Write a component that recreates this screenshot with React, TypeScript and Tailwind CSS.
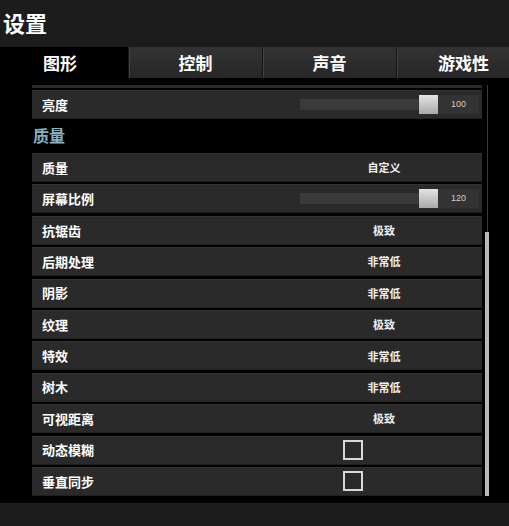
import React from 'react';

type Row =
  | { label: string; kind: 'value'; value: string }
  | { label: string; kind: 'slider'; value: string }
  | { label: string; kind: 'check' };

const qualityRows: Row[] = [
  { label: '质量', kind: 'value', value: '自定义' },
  { label: '屏幕比例', kind: 'slider', value: '120' },
  { label: '抗锯齿', kind: 'value', value: '极致' },
  { label: '后期处理', kind: 'value', value: '非常低' },
  { label: '阴影', kind: 'value', value: '非常低' },
  { label: '纹理', kind: 'value', value: '极致' },
  { label: '特效', kind: 'value', value: '非常低' },
  { label: '树木', kind: 'value', value: '非常低' },
  { label: '可视距离', kind: 'value', value: '极致' },
  { label: '动态模糊', kind: 'check' },
  { label: '垂直同步', kind: 'check' },
];

const tabs = ['控制', '声音', '游戏性'];

function Slider({ value }: { value: string }) {
  return (
    <div className="ml-auto mr-[3px] flex items-center">
      <div className="w-[119px] h-[11px] bg-[#3a3a3a]" />
      <div className="w-[19px] h-[19px] bg-gradient-to-b from-[#e4e4e4] to-[#a9a9a9]" />
      <div className="w-[41px] h-[19px] bg-[#333333] flex items-center justify-center text-[9px] text-[#d0d0d0] font-['Liberation_Sans_Narrow','Liberation_Sans',sans-serif]">
        {value}
      </div>
    </div>
  );
}

function SettingRow({ row }: { row: Row }) {
  return (
    <div className="h-[29px] flex items-center bg-[#2a2a2a] border-t border-[#333333] border-b border-b-[#1f1f1f]">
      <div className="w-[272px] pl-[10px] text-[13px] font-bold text-white">{row.label}</div>
      {row.kind === 'value' && (
        <div className="w-[160px] text-center text-[11px] font-bold text-[#f0f0f0]">{row.value}</div>
      )}
      {row.kind === 'slider' && <Slider value={row.value} />}
      {row.kind === 'check' && (
        <div className="ml-[39px] w-[20px] h-[20px] border-2 border-[#d8d8d8]" />
      )}
    </div>
  );
}

export default function App() {
  return (
    <div className="w-[509px] h-[526px] bg-black flex flex-col overflow-hidden font-['Noto_Sans_CJK_SC','Noto_Sans',sans-serif]">
      {/* Titel */}
      <div className="h-[47px] shrink-0 bg-[#1c1c1c] flex items-center pl-[3px] pb-[2px] text-[22px] font-bold text-white">
        设置
      </div>

      {/* Tabs */}
      <div className="h-[31px] shrink-0 flex">
        <div className="w-[128px] shrink-0 bg-black flex items-center justify-center pr-[8px] text-[17px] font-bold text-white">
          图形
        </div>
        {tabs.map((t) => (
          <div
            key={t}
            className="w-[134px] shrink-0 bg-gradient-to-b from-[#333333] to-[#272727] border-l border-l-[#141414] shadow-[inset_1px_0_0_#454545] flex items-center justify-center text-[17px] font-bold text-white"
          >
            {t}
          </div>
        ))}
      </div>

      {/* Inhalt */}
      <div className="flex-1 flex pl-[32px]">
        <div className="w-[450px] pt-[7px] flex flex-col">
          <div className="h-[3px] bg-[#2a2a2a]" />
          <div className="mt-[2px]">
            <SettingRow row={{ label: '亮度', kind: 'slider', value: '100' }} />
          </div>
          <div className="h-[34px] flex items-center pl-[1px] pb-[2px] text-[16px] font-bold text-[#86b2c2]">
            质量
          </div>
          <div className="flex flex-col gap-[2.4px]">
            {qualityRows.map((r) => (
              <SettingRow key={r.label} row={r} />
            ))}
          </div>
        </div>

        {/* Scrollbar */}
        <div className="ml-[3px] w-[4px] pt-[7px] flex flex-col">
          <div className="h-[147px] flex justify-center">
            <div className="w-[1px] bg-[#3a3a3a]" />
          </div>
          <div className="h-[264px] bg-[#b8b8b8]" />
        </div>
      </div>

      <div className="h-[23px] shrink-0 bg-[#1c1c1c]" />
    </div>
  );
}
